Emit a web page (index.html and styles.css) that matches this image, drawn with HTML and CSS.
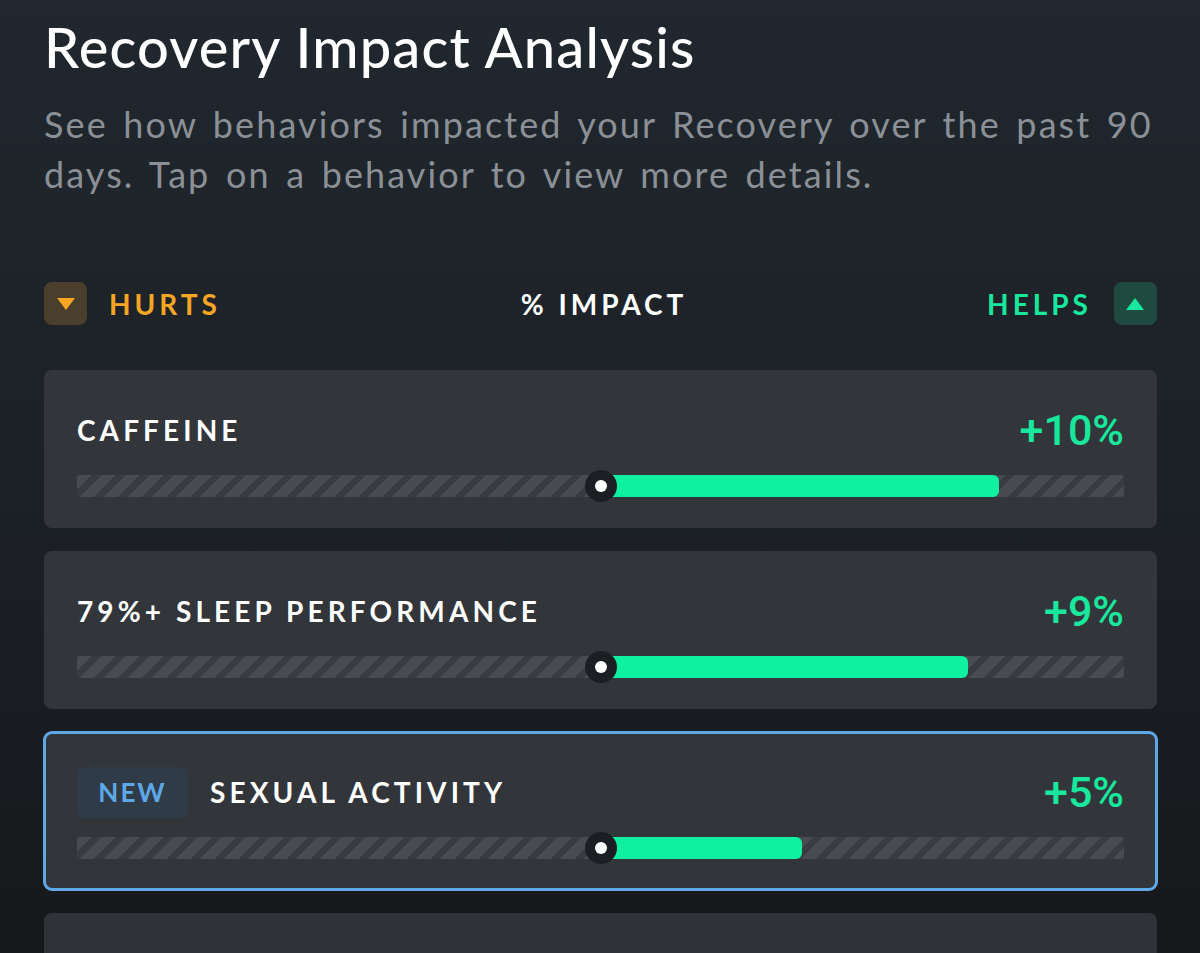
FILE: index.html
```html
<!DOCTYPE html>
<html>
<head>
<meta charset="utf-8">
<link rel="stylesheet" href="styles.css">
</head>
<body>
<div class="page">
  <h1 class="title">Recovery Impact Analysis</h1>
  <p class="subtitle">See how behaviors impacted your Recovery over the past 90 days. Tap on a behavior to view more details.</p>

  <div class="legend">
    <div class="legend-side">
      <span class="chip chip-hurts"><svg width="20" height="14" viewBox="0 0 20 14"><path d="M1 1 H19 L10 13 Z" fill="#f6a623"/></svg></span>
      <span class="legend-label hurts">HURTS</span>
    </div>
    <span class="legend-label impact">% IMPACT</span>
    <div class="legend-side">
      <span class="legend-label helps">HELPS</span>
      <span class="chip chip-helps"><svg width="20" height="14" viewBox="0 0 20 14"><path d="M1 13 H19 L10 1 Z" fill="#17e89d"/></svg></span>
    </div>
  </div>

  <div class="cards">
    <div class="card">
      <div class="card-top">
        <div class="card-name"><span class="name">CAFFEINE</span></div>
        <span class="value">+10%</span>
      </div>
      <div class="track">
        <div class="fill" style="width: 38.1%"></div>
        <div class="dot"></div>
      </div>
    </div>

    <div class="card">
      <div class="card-top">
        <div class="card-name"><span class="name">79%+ SLEEP PERFORMANCE</span></div>
        <span class="value">+9%</span>
      </div>
      <div class="track">
        <div class="fill" style="width: 35.1%"></div>
        <div class="dot"></div>
      </div>
    </div>

    <div class="card card-selected">
      <div class="card-top">
        <div class="card-name"><span class="badge">NEW</span><span class="name">SEXUAL ACTIVITY</span></div>
        <span class="value">+5%</span>
      </div>
      <div class="track">
        <div class="fill" style="width: 19.2%"></div>
        <div class="dot"></div>
      </div>
    </div>

    <div class="card card-empty"></div>
  </div>
</div>
</body>
</html>
```

FILE: styles.css
```css
html, body {
  margin: 0;
  padding: 0;
}
body {
  width: 1200px;
  height: 953px;
  overflow: hidden;
  background: linear-gradient(180deg, #20272e 0%, #1c2126 50%, #16181b 100%);
  font-family: Lato, "Open Sans", sans-serif;
}
.page {
  padding: 13px 40px 0 44px;
}
.title {
  margin: 0;
  font-size: 56px;
  line-height: 1.2;
  font-weight: 500;
  color: #ffffff;
  letter-spacing: 1.2px;
}
.subtitle {
  margin: 19px 0 0 0;
  max-width: 1112px;
  font-size: 36px;
  line-height: 50px;
  color: #8b9096;
  font-weight: 400;
  letter-spacing: 2.1px;
  word-spacing: 4.2px;
}
.legend {
  margin-top: 83px;
  display: flex;
  align-items: center;
  justify-content: space-between;
  height: 43px;
  margin-right: 3px;
}
.legend-side {
  display: flex;
  align-items: center;
  gap: 22px;
}
.chip {
  width: 43px;
  height: 43px;
  border-radius: 8px;
  display: flex;
  align-items: center;
  justify-content: center;
}
.chip-hurts { background: #4a3e2c; }
.chip-helps { background: #1f4a3f; }
.legend-label {
  font-size: 28px;
  font-weight: 700;
  letter-spacing: 4px;
}
.hurts { color: #f6a623; }
.helps { color: #17e89d; }
.impact { color: #ffffff; }

.cards {
  margin-top: 45px;
  margin-right: 3px;
  display: flex;
  flex-direction: column;
  gap: 23px;
}
.card {
  background: #32363b;
  border-radius: 8px;
  padding: 32px 33px 31px 33px;
}
.card-selected {
  outline: 3px solid #5ea8e8;
  outline-offset: -2px;
}
.card-empty {
  height: 100px;
  background: #2f3237;
}
.card-top {
  height: 56px;
  display: flex;
  align-items: center;
  justify-content: space-between;
}
.card-name {
  display: flex;
  align-items: center;
  gap: 22px;
}
.name {
  font-size: 28px;
  font-weight: 700;
  color: #ffffff;
  letter-spacing: 4.1px;
}
.badge {
  background: #2f3c48;
  color: #5ea8e8;
  border-radius: 7px;
  height: 51px;
  width: 111px;
  display: flex;
  align-items: center;
  justify-content: center;
  font-size: 26px;
  font-weight: 700;
  letter-spacing: 2px;
}
.value {
  font-family: Roboto, "Liberation Sans", sans-serif;
  font-size: 43px;
  font-weight: 500;
  color: #17e89d;
}
.track {
  margin-top: 17px;
  position: relative;
  height: 22px;
  border-radius: 3px;
  background: repeating-linear-gradient(135deg, #484b50 0 10.5px, #383c41 10.5px 17px);
}
.fill {
  position: absolute;
  left: 50%;
  top: 0;
  bottom: 0;
  background: #0ff0a0;
  border-radius: 0 6px 6px 0;
}
.dot {
  position: absolute;
  left: 50%;
  top: 50%;
  width: 32px;
  height: 32px;
  margin: -16px 0 0 -16px;
  border-radius: 50%;
  background: #1b1f24;
  display: flex;
  align-items: center;
  justify-content: center;
}
.dot::after {
  content: "";
  width: 12px;
  height: 12px;
  border-radius: 50%;
  background: #ffffff;
}
```
